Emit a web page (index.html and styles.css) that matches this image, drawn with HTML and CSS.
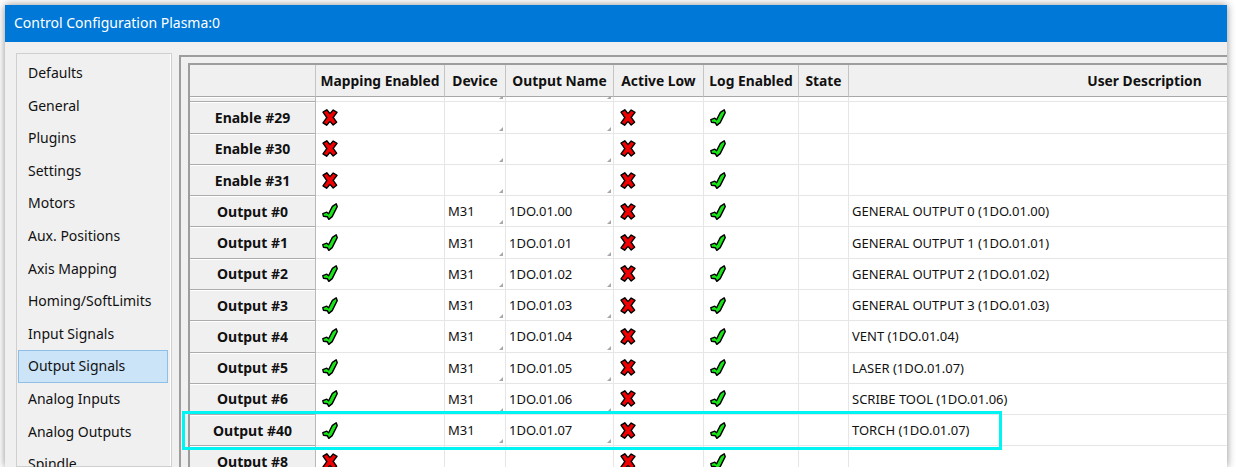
FILE: index.html
```html
<!DOCTYPE html>
<html lang="en">

<head>
    <meta charset="UTF-8">
    <title>Control Configuration Plasma:0</title>
    <link rel="stylesheet" href="styles.css">
</head>

<body>
    <div class="window">
        <div class="titlebar">Control Configuration Plasma:0</div>

        <div class="content">
            <ul class="nav">
                <li>Defaults</li>
                <li>General</li>
                <li>Plugins</li>
                <li>Settings</li>
                <li>Motors</li>
                <li>Aux. Positions</li>
                <li>Axis Mapping</li>
                <li>Homing/SoftLimits</li>
                <li>Input Signals</li>
                <li class="selected">Output Signals</li>
                <li>Analog Inputs</li>
                <li>Analog Outputs</li>
                <li>Spindle</li>
            </ul>

            <div class="grid-frame">
                <div class="grid">
                    <div class="row head">
                        <div class="cell"></div>
                        <div class="cell">Mapping Enabled</div>
                        <div class="cell">Device</div>
                        <div class="cell">Output Name</div>
                        <div class="cell">Active Low</div>
                        <div class="cell">Log Enabled</div>
                        <div class="cell">State</div>
                        <div class="cell">User Description</div>
                    </div>
                    <div class="row sliver">
                        <div class="cell rowhead"></div>
                        <div class="cell"></div>
                        <div class="cell combo"></div>
                        <div class="cell combo"></div>
                        <div class="cell"></div>
                        <div class="cell"></div>
                        <div class="cell"></div>
                        <div class="cell"></div>
                    </div>
                    <div id="rows"></div>
                </div>
            </div>
        </div>

        <!-- marker drawn round the torch row -->
        <div class="highlight"></div>
    </div>

    <script>
        const rows = [
            ['Enable #29', false, '', '', ''],
            ['Enable #30', false, '', '', ''],
            ['Enable #31', false, '', '', ''],
            ['Output #0', true, 'M31', '1DO.01.00', 'GENERAL OUTPUT 0 (1DO.01.00)'],
            ['Output #1', true, 'M31', '1DO.01.01', 'GENERAL OUTPUT 1 (1DO.01.01)'],
            ['Output #2', true, 'M31', '1DO.01.02', 'GENERAL OUTPUT 2 (1DO.01.02)'],
            ['Output #3', true, 'M31', '1DO.01.03', 'GENERAL OUTPUT 3 (1DO.01.03)'],
            ['Output #4', true, 'M31', '1DO.01.04', 'VENT (1DO.01.04)'],
            ['Output #5', true, 'M31', '1DO.01.05', 'LASER (1DO.01.07)'],
            ['Output #6', true, 'M31', '1DO.01.06', 'SCRIBE TOOL (1DO.01.06)'],
            ['Output #40', true, 'M31', '1DO.01.07', 'TORCH (1DO.01.07)'],
            ['Output #8', false, '', '', '']
        ];

        const cross = `<svg class="icon" viewBox="0 0 16 17" width="16" height="17"><path d="M1 3.2 L4.8 0.8 L8 4.6 L11.2 1 L15 3.4 L11.2 8.4 L14.6 13.2 L11.2 16 L8 12.4 L4.6 16.2 L1 13.8 L4.8 8.6 Z" fill="#f00000" stroke="#000" stroke-width="1.4" stroke-linejoin="round"/></svg>`;
        const tick = `<svg class="icon" viewBox="0 0 16 17" width="16" height="17"><path d="M0.8 10.6 L4.8 9.2 L6.6 10.8 L10.4 3.4 L14.2 0.8 L15.2 3.6 L10.2 13.6 L6.8 16.4 L5.4 13.8 L1.4 13.2 Z" fill="#19e619" stroke="#000" stroke-width="1.4" stroke-linejoin="round"/></svg>`;

        const rowsEl = document.getElementById('rows');

        rows.forEach(r => {
            const row = document.createElement('div');
            row.className = 'row';
            row.innerHTML = `
        <div class="cell rowhead">${r[0]}</div>
        <div class="cell">${r[1] ? tick : cross}</div>
        <div class="cell combo">${r[2]}</div>
        <div class="cell combo">${r[3]}</div>
        <div class="cell">${cross}</div>
        <div class="cell">${tick}</div>
        <div class="cell"></div>
        <div class="cell">${r[4]}</div>
        `;
            rowsEl.appendChild(row);
        });
    </script>
</body>

</html>
```

FILE: styles.css
```css
body {
    margin: 0;
    background-color: #fff;
    font-family: "Noto Sans", "Open Sans", sans-serif;
    font-size: 13px;
    color: #111;
}

.window {
    position: relative;
    margin: 5px 0 0 5px;
    width: 1222px;
    height: 462px;
    background-color: #f0f0f0;
    box-shadow: 0 0 8px rgba(0, 0, 0, 0.45);
    overflow: hidden;
}

.titlebar {
    height: 37px;
    line-height: 36px;
    padding-left: 9px;
    background-color: #0078d7;
    color: #fff;
    font-size: 14px;
}

.content {
    display: flex;
    gap: 7px;
    padding: 11px 0 0 11px;
    height: 414px;
}

/* left list */
.nav {
    flex: none;
    width: 154px;
    margin: 0;
    padding: 3px 0 0 0;
    list-style: none;
    border: 1px solid #cfcfcf;
    box-shadow: inset -1px 0 #fff;
    font-size: 14px;
}

.nav li {
    height: 32.6px;
    line-height: 30px;
    margin: 0 3px 0 1px;
    padding-left: 9px;
    box-sizing: border-box;
    border: 1px solid transparent;
    white-space: nowrap;
}

.nav li.selected {
    background-color: #cce4f7;
    border-color: #8fbfe6;
}

/* grid */
.grid-frame {
    flex: 1;
    margin-top: 2px;
    padding: 6px 0 0 7px;
    border-top: 2px solid #9d9d9d;
    border-left: 2px solid #9d9d9d;
    min-width: 0;
}

.grid {
    border-top: 2px solid #9d9d9d;
    border-left: 2px solid #9d9d9d;
    background-color: #fff;
    height: 100%;
}

.row {
    display: grid;
    grid-template-columns: 126px 129px 61px 108px 90px 95px 50px 592px;
    height: 31.27px;
}

.row .cell {
    position: relative;
    display: flex;
    align-items: center;
    padding-left: 3px;
    border-right: 1px solid #e6e6e6;
    border-bottom: 1px solid #e6e6e6;
    white-space: nowrap;
    overflow: hidden;
}

.row .cell .icon {
    margin-left: 3px;
}

.row.head {
    height: 32px;
    background-color: #f0f0f0;
    font-weight: bold;
    font-size: 13.8px;
}

.row.head .cell {
    justify-content: center;
    padding-left: 0;
    border-right: 1px solid #c4c4c4;
    border-bottom: 1px solid #a8a8a8;
}

.row.sliver {
    height: 5.4px;
}

.cell.rowhead {
    justify-content: center;
    padding-left: 0;
    background-color: #f0f0f0;
    font-weight: bold;
    font-size: 14px;
    border-right: 1px solid #b9b9b9;
    border-bottom: 1px solid #acacac;
    box-shadow: inset 0 1px #fff;
}

.cell.combo::after {
    content: "";
    position: absolute;
    right: 2px;
    bottom: 2px;
    border-left: 4px solid transparent;
    border-bottom: 4px solid #a8a8a8;
}

.highlight {
    position: absolute;
    left: 177px;
    top: 406px;
    width: 814px;
    height: 33px;
    border: 3px solid #00f4f4;
}
```
